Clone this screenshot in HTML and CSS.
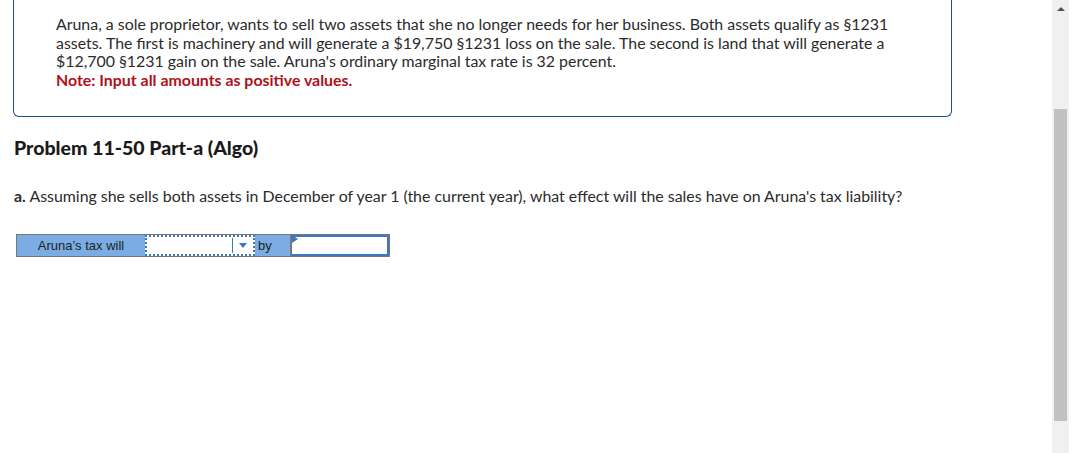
FILE: index.html
```html
<!DOCTYPE html>
<html lang="en">
<head>
    <meta charset="UTF-8">
    <title>Problem 11-50 Part-a (Algo)</title>
    <link rel="stylesheet" href="styles.css">
</head>
<body>
    <div class="page">
        <div class="content">
            <div class="intro-box">
                <p>Aruna, a sole proprietor, wants to sell two assets that she no longer needs for her business. Both assets qualify as §1231 assets. The first is machinery and will generate a $19,750 §1231 loss on the sale. The second is land that will generate a $12,700 §1231 gain on the sale. Aruna's ordinary marginal tax rate is 32 percent.</p>
                <p class="note">Note: Input all amounts as positive values.</p>
            </div>

            <h2>Problem 11-50 Part-a (Algo)</h2>

            <p class="question"><b>a.</b> Assuming she sells both assets in December of year 1 (the current year), what effect will the sales have on Aruna's tax liability?</p>

            <div class="answer-row">
                <div class="label-cell">Aruna’s tax will</div>
                <div class="select-cell">
                    <span class="select-arrow"></span>
                </div>
                <div class="by-cell">by</div>
                <div class="input-cell"></div>
            </div>
        </div>
        <div class="scrollbar">
            <div class="scroll-up"></div>
            <div class="scroll-thumb"></div>
        </div>
    </div>
</body>
</html>
```

FILE: styles.css
```css
body, html {
    margin: 0;
    padding: 0;
    background-color: white;
    font-family: Lato, "Open Sans", sans-serif;
    color: #2b2b2b;
}
.page {
    display: flex;
    width: 1092px;
    height: 453px;
    overflow: hidden;
}
.content {
    width: 1052px;
    flex-shrink: 0;
}
.intro-box {
    margin-left: 13px;
    width: 939px;
    border: 1px solid #1f4e8c;
    border-top: none;
    border-radius: 0 0 6px 6px;
    padding: 15px 0 27px 42px;
    box-sizing: border-box;
    font-size: 15.9px;
    line-height: 18.5px;
}
.intro-box p {
    margin: 0;
    width: 845px;
}
.note {
    color: #b0101c;
    font-weight: bold;
}
h2 {
    margin: 19px 0 0 14px;
    font-size: 19.5px;
    font-weight: 900;
    color: #1a1a1a;
}
.question {
    margin: 27px 0 0 14px;
    font-size: 15.9px;
}
.answer-row {
    display: flex;
    margin: 29px 0 0 16px;
    width: 374px;
    height: 23px;
    border: 1px solid #777;
    box-sizing: border-box;
    background-color: #7aade4;
    font-family: "Liberation Sans", Arial, sans-serif;
    font-size: 13px;
    color: #222;
}
.label-cell {
    width: 128px;
    text-align: center;
    line-height: 21px;
}
.select-cell {
    width: 110px;
    background-color: white;
    border: 2px dotted #3a78c2;
    box-sizing: border-box;
    position: relative;
}
.select-cell::before {
    content: "";
    position: absolute;
    right: 20px;
    top: 1px;
    bottom: 1px;
    border-left: 1px solid #3a78c2;
}
.select-arrow {
    position: absolute;
    right: 6px;
    top: 6px;
    border-left: 4px solid transparent;
    border-right: 4px solid transparent;
    border-top: 5px solid #3a78c2;
}
.by-cell {
    width: 35px;
    line-height: 21px;
    padding-left: 3px;
    box-sizing: border-box;
}
.input-cell {
    flex-grow: 1;
    background-color: white;
    border: 2px solid #3a78c2;
    border-left-color: #777;
    position: relative;
}
.input-cell::before {
    content: "";
    position: absolute;
    left: 0;
    top: 0;
    border-top: 4px solid transparent;
    border-bottom: 4px solid transparent;
    border-left: 6px solid #3a78c2;
    transform: translateY(-2px);
}
.scrollbar {
    width: 17px;
    height: 453px;
    background-color: #f0f0f0;
    display: flex;
    flex-direction: column;
    align-items: center;
}
.scroll-up {
    margin-top: 7px;
    border-left: 4px solid transparent;
    border-right: 4px solid transparent;
    border-bottom: 4px solid #505050;
}
.scroll-thumb {
    margin-top: 98px;
    width: 13px;
    height: 312px;
    background-color: #c1c1c1;
}
```
